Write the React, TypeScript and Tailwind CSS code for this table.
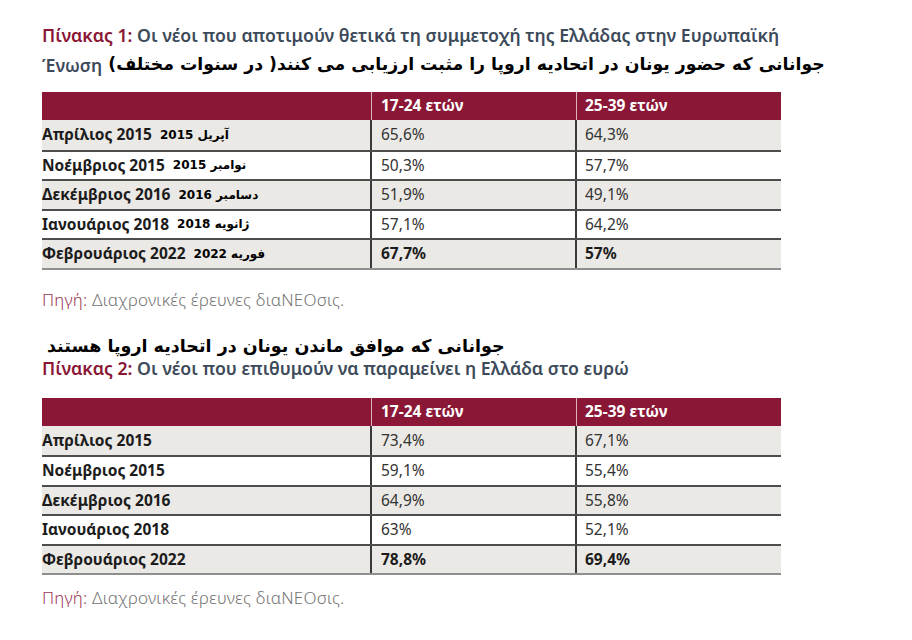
import React from "react";

type Row = { label: string; fa?: string; a: string; b: string; bold?: boolean };

const table1: Row[] = [
  { label: "Απρίλιος 2015", fa: "آپریل 2015", a: "65,6%", b: "64,3%" },
  { label: "Νοέμβριος 2015", fa: "نوامبر 2015", a: "50,3%", b: "57,7%" },
  { label: "Δεκέμβριος 2016", fa: "دسامبر 2016", a: "51,9%", b: "49,1%" },
  { label: "Ιανουάριος 2018", fa: "ژانویه 2018", a: "57,1%", b: "64,2%" },
  { label: "Φεβρουάριος 2022", fa: "فوریه 2022", a: "67,7%", b: "57%", bold: true },
];

const table2: Row[] = [
  { label: "Απρίλιος 2015", a: "73,4%", b: "67,1%" },
  { label: "Νοέμβριος 2015", a: "59,1%", b: "55,4%" },
  { label: "Δεκέμβριος 2016", a: "64,9%", b: "55,8%" },
  { label: "Ιανουάριος 2018", a: "63%", b: "52,1%" },
  { label: "Φεβρουάριος 2022", a: "78,8%", b: "69,4%", bold: true },
];

const greek = "font-['Noto_Sans','Open_Sans',sans-serif]";
const farsi = "font-['DejaVu_Sans','Noto_Sans',sans-serif]";

const DataTable = ({ rows }: { rows: Row[] }) => (
  <div className={`w-[739px] ${greek} text-[15.5px]`}>
    <div className="grid grid-cols-[330px_205px_204px] h-[28px] bg-[#8a1736] text-white font-bold">
      <div className="border-r border-[#d9b3bd]" />
      <div className="flex items-center pl-[9px] border-r border-[#d9b3bd]">17-24 ετών</div>
      <div className="flex items-center pl-[8px]">25-39 ετών</div>
    </div>
    <div className="border-b-2 border-[#8f8f8f]">
      {rows.map((r, i) => (
        <div
          key={r.label}
          className={`grid grid-cols-[330px_205px_204px] h-[29.5px] ${
            i % 2 === 0 ? "bg-[#ebe9e5]" : "bg-white"
          } ${i > 0 ? "border-t-2 border-[#4d4d4d]" : ""}`}
        >
          <div className="flex items-center border-r-2 border-[#3a3a3a] font-bold text-[#1c1c1c]">
            <span className="whitespace-nowrap">{r.label}</span>
            {r.fa && (
              <span dir="rtl" className={`${farsi} ml-[8px] text-[12px] font-bold text-black`}>
                {r.fa}
              </span>
            )}
          </div>
          <div
            className={`flex items-center pl-[9px] border-r-2 border-[#3a3a3a] ${
              r.bold ? "font-bold text-[#1c1c1c]" : "text-[#333]"
            }`}
          >
            {r.a}
          </div>
          <div
            className={`flex items-center pl-[8px] ${
              r.bold ? "font-bold text-[#1c1c1c]" : "text-[#333]"
            }`}
          >
            {r.b}
          </div>
        </div>
      ))}
    </div>
  </div>
);

const Source = ({ className }: { className: string }) => (
  <div
    className={`h-[20px] flex items-center ${greek} font-light text-[17px] tracking-[0.2px] text-[#737373] ${className}`}
  >
    <span className="text-[#9c3a55]">Πηγή:</span>&nbsp;Διαχρονικές έρευνες διαNEOσις.
  </div>
);

export default function App() {
  return (
    <div className="w-[912px] h-[640px] bg-white pl-[42px] pt-[23px] overflow-hidden">
      <div className={`h-[24px] flex items-center ${greek} font-semibold text-[17.7px] text-[#3d4a5a] whitespace-nowrap`}>
        <span className="text-[#8a1736]">Πίνακας 1:</span>&nbsp;Οι νέοι που αποτιμούν θετικά τη συμμετοχή της Ελλάδας στην Ευρωπαϊκή
      </div>
      <div className="mt-[3px] h-[30px] flex items-center whitespace-nowrap">
        <span className={`${greek} font-semibold text-[17.7px] text-[#3d4a5a]`}>Ένωση</span>
        <span dir="rtl" className={`${farsi} ml-[6px] text-[17.3px] font-bold text-black`}>
          جوانانی که حضور یونان در اتحادیه اروپا را مثبت ارزیابی می کنند( در سنوات مختلف)
        </span>
      </div>
      <div className="mt-[12px]">
        <DataTable rows={table1} />
      </div>
      <Source className="mt-[20px]" />
      <div className="mt-[25px] h-[24px] flex items-center pl-[5px] whitespace-nowrap">
        <span dir="rtl" className={`${farsi} text-[17.5px] font-bold text-black`}>
          جوانانی که موافق ماندن یونان در اتحادیه اروپا هستند
        </span>
      </div>
      <div className={`h-[20px] flex items-center ${greek} font-semibold text-[17.7px] text-[#3d4a5a] whitespace-nowrap`}>
        <span className="text-[#8a1736]">Πίνακας 2:</span>&nbsp;Οι νέοι που επιθυμούν να παραμείνει η Ελλάδα στο ευρώ
      </div>
      <div className="mt-[19px]">
        <DataTable rows={table2} />
      </div>
      <Source className="mt-[13px]" />
    </div>
  );
}
